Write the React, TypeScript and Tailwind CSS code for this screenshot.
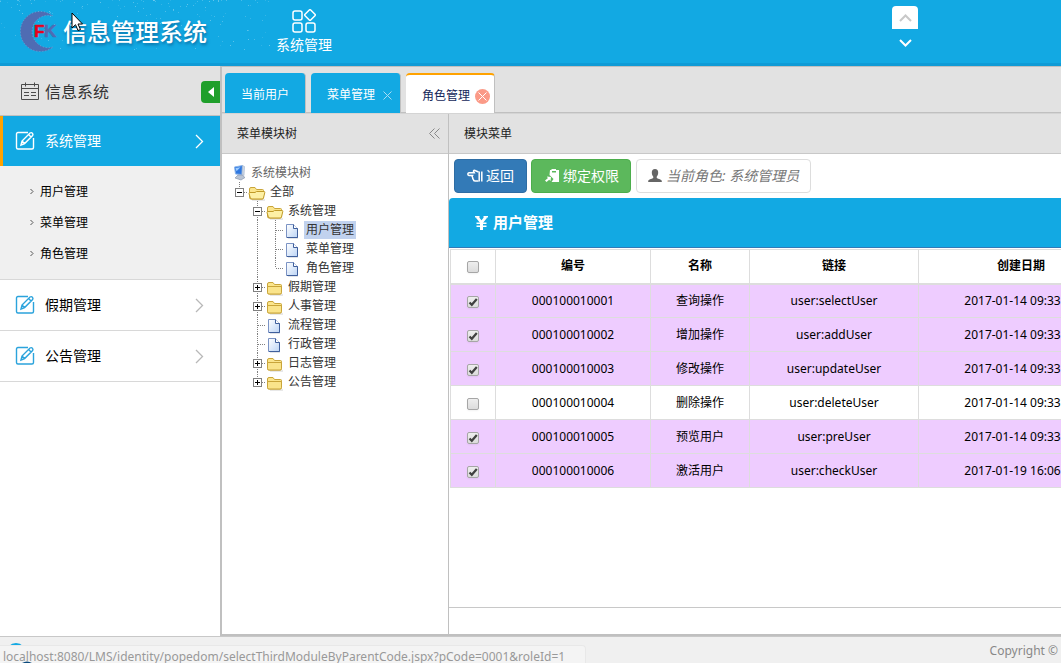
import { useState } from "react";

type NodeKind = "folder" | "open" | "page";
type Toggle = "minus" | "plus" | "none";

interface TreeRow {
  name: string;
  kind: NodeKind;
  toggle: Toggle;
  level: number;
  last?: boolean;
  selected?: boolean;
}

const treeRows: TreeRow[] = [
  { name: "全部", kind: "open", toggle: "minus", level: 0, last: true },
  { name: "系统管理", kind: "open", toggle: "minus", level: 1 },
  { name: "用户管理", kind: "page", toggle: "none", level: 2, selected: true },
  { name: "菜单管理", kind: "page", toggle: "none", level: 2 },
  { name: "角色管理", kind: "page", toggle: "none", level: 2, last: true },
  { name: "假期管理", kind: "folder", toggle: "plus", level: 1 },
  { name: "人事管理", kind: "folder", toggle: "plus", level: 1 },
  { name: "流程管理", kind: "page", toggle: "none", level: 1 },
  { name: "行政管理", kind: "page", toggle: "none", level: 1 },
  { name: "日志管理", kind: "folder", toggle: "plus", level: 1 },
  { name: "公告管理", kind: "folder", toggle: "plus", level: 1, last: true },
];

const operations = [
  { code: "000100010001", name: "查询操作", url: "user:selectUser", date: "2017-01-14 09:33:35" },
  { code: "000100010002", name: "增加操作", url: "user:addUser", date: "2017-01-14 09:33:35" },
  { code: "000100010003", name: "修改操作", url: "user:updateUser", date: "2017-01-14 09:33:35" },
  { code: "000100010004", name: "删除操作", url: "user:deleteUser", date: "2017-01-14 09:33:35" },
  { code: "000100010005", name: "预览用户", url: "user:preUser", date: "2017-01-14 09:33:35" },
  { code: "000100010006", name: "激活用户", url: "user:checkUser", date: "2017-01-19 16:06:12" },
];

const stars = Array.from({ length: 150 }, (_, i) => {
  const a = Math.abs(Math.sin(i * 12.9898) * 43758.5453) % 1;
  const b = Math.abs(Math.sin(i * 78.233) * 12543.123) % 1;
  return { x: Math.floor(a * 270), y: Math.floor(b * b * 50), o: 0.1 + ((i * 7) % 10) / 40 };
});

const Logo = () => (
  <svg width="42" height="42" viewBox="0 0 42 42" className="shrink-0">
    <path
      d="M33 5 A20 20 0 1 0 33 36 A16.2 16.2 0 1 1 33 5Z"
      fill="#4f6cb3"
      stroke="#7aa5d6"
      strokeWidth="0.8"
      strokeDasharray="1 2"
    />
    <text x="14" y="26" fontSize="17" fontWeight="900" fontFamily="Liberation Sans, sans-serif" fill="#e8001c" stroke="#e8001c" strokeWidth="0.6">
      F
    </text>
    <text x="24" y="26" fontSize="17" fontWeight="900" fontFamily="Liberation Sans, sans-serif" fill="#4f6cb3" stroke="#4f6cb3" strokeWidth="0.6">
      K
    </text>
  </svg>
);

const GridIcon = () => (
  <svg width="24" height="24" viewBox="0 0 24 24" fill="none" stroke="white" strokeWidth="1.5">
    <rect x="1" y="2" width="9" height="9" rx="2" />
    <rect x="1" y="14" width="9" height="9" rx="2" />
    <rect x="14" y="14" width="9" height="9" rx="2" />
    <rect x="14" y="2" width="8" height="8" rx="1" transform="rotate(45 18 6)" />
  </svg>
);

const CalendarIcon = () => (
  <svg width="19" height="19" viewBox="0 0 19 19" fill="none" stroke="#4a4a4a" strokeWidth="1">
    <path d="M.5 2.500h17v15H.5zM.5 6.500h17M4.500.5v4M13.500.5v4" />
    <path d="M3 10.500h5M10 10.500h5M3 13.500h5M10 13.500h5" />
  </svg>
);

const EditIcon = ({ color }: { color: string }) => (
  <svg width="20" height="20" viewBox="0 0 20 20" fill="none" stroke={color} strokeWidth="1.4">
    <path d="M13 1.500H3Q1.500 1.500 1.500 3v13.500q0 1.500 1.500 1.500h14q1.500 0 1.500-1.500V7" />
    <path d="M6 14l1-4 8-8q1.400-.8 2.400.2t.2 2.400l-8 8zM13.500 3.500l2.600 2.600M7 10l2.800 2.700" />
  </svg>
);

const Chevron = ({ color }: { color: string }) => (
  <svg width="9" height="15" viewBox="0 0 9 15" fill="none" stroke={color} strokeWidth="1.3">
    <path d="M1 1l6.500 6.500L1 14" />
  </svg>
);

const Bars = ({ end }: { end: boolean }) => (
  <svg width="18" height="19" className="shrink-0" stroke="#808080" strokeDasharray="1 1" fill="none">
    <path d={end ? "M9.500 0v10" : "M9.500 0v19"} />
    <path d="M10 10.500h8" />
  </svg>
);

const Branch = ({ row }: { row: TreeRow }) => {
  if (row.toggle === "none") return <Bars end={!!row.last} />;
  return (
    <button type="button" aria-label={row.name} className="shrink-0 cursor-pointer">
      <svg width="18" height="19" fill="none" className="block">
        <g stroke="#808080" strokeDasharray="1 1">
          <path d={row.last ? "M9.500 0v10" : "M9.500 0v19"} />
          <path d="M14 10.500h4" />
        </g>
        <rect x="5.500" y="6.500" width="8" height="8" fill="white" stroke="#808080" />
        <path d={row.toggle === "plus" ? "M7 10.500h5M9.500 8v5" : "M7 10.500h5"} stroke="black" />
      </svg>
    </button>
  );
};

const NodeIcon = ({ kind }: { kind: NodeKind }) => {
  if (kind === "page") {
    return (
      <svg width="18" height="19" className="shrink-0">
        <defs>
          <linearGradient id="paper" x1="0" y1="0" x2="1" y2="1">
            <stop offset="0" stopColor="#ffffff" />
            <stop offset="1" stopColor="#bcd4f5" />
          </linearGradient>
        </defs>
        <path d="M4 17.500h10v1H4z" fill="#c4c8d0" />
        <path d="M2.500 4.500h7l4 4v9h-11z" fill="url(#paper)" stroke="#7b93c4" />
        <path d="M9.500 4.500v4h4" fill="#ffffff" stroke="#3f5f9c" />
        <path d="M13.500 8.500v9H3" fill="none" stroke="#3f5f9c" />
      </svg>
    );
  }
  return (
    <svg width="18" height="19" className="shrink-0">
      <path d="M4 17.500h13v1H4z" fill="#d0d0d0" />
      <path d="M1.500 7q0-1.500 1.500-1.500h4l1.500 2h6q1 0 1 1v7q0 1.500-1.500 1.500H3q-1.500 0-1.500-1.500z" fill="#fbe58c" stroke="#c9a53a" />
      {kind === "open" ? (
        <path d="M2.500 16.500L1 11.500q0-1 1-1h5l1.500-1h7.500q1 0 .8 1L15.500 16q-.3 1-1.300 1H4z" fill="#fdf0a5" stroke="#c09a28" />
      ) : (
        <path d="M1.500 9.500h14v6q0 1.500-1.500 1.500H3q-1.500 0-1.500-1.500z" fill="#fae48b" stroke="#c9a53a" />
      )}
    </svg>
  );
};

const ComputerIcon = () => (
  <svg width="18" height="19" className="shrink-0">
    <path d="M4.500 4l8-1.500-.5 9-6.500-.5z" fill="#2f78e0" stroke="#8ab4ea" />
    <path d="M12.500 2.500l2 1-.5 9-2-1z" fill="#cfd8e6" stroke="#9fb0c8" strokeWidth="0.6" />
    <path d="M5.500 5l5-.8-4 4z" fill="#9dccff" />
    <path d="M8 12h4l3 2.500-4 2.500-6-2z" fill="#b9c4d4" stroke="#7f8fa8" strokeWidth="0.6" />
  </svg>
);

const HandIcon = () => (
  <svg width="16" height="14" viewBox="0 0 16 14" fill="none" stroke="white" strokeWidth="1.5">
    <path d="M11.500 3L8 1.500q-1.500-.5-1.500.8l.8 1.500H2q-1.200.2-1.200 1.300T2 6.500h3.500q-.8 1.300.2 2.200-.3 1.300.7 1.800 0 1.500 1.600 1.500h3.500" />
    <path d="M12.200 2.500v10M14.800 2.500v10" />
  </svg>
);

const PasteIcon = () => (
  <svg width="14" height="14" viewBox="0 0 14 14" fill="white">
    <path d="M5 1h1.500V0h4.500v1H14v12H6.500l2-3-4-4z M7 2v1.500h4V2z" fillRule="evenodd" />
    <path d="M2 7.500L6 8l-.5 4-1.300-1.300L1.500 13 0 11.500l2.800-2.200z" />
  </svg>
);

const UserIcon = () => (
  <svg width="14" height="14" viewBox="0 0 14 14" fill="#666">
    <path d="M7 0c2.200 0 3.300 1.600 3.200 3.800C10.100 5.900 9.300 7 8.700 7.700v1c.4 1 4.300 1.300 5.100 3V13H.2v-1.300c.8-1.700 4.700-2 5.100-3v-1C4.700 7 3.900 5.900 3.800 3.800 3.700 1.600 4.800 0 7 0z" />
  </svg>
);

const YenIcon = () => (
  <svg width="13" height="14" viewBox="0 0 13 14" fill="none" stroke="white">
    <path d="M2 0.800L6.500 6.500 11 0.800" strokeWidth="2.800" />
    <path d="M0 .8h4.500M8.500.8H13" strokeWidth="1.400" />
    <path d="M6.500 5.500V14" strokeWidth="3" />
    <path d="M1.500 7.300h10M1.500 10.300h10" strokeWidth="1.500" />
  </svg>
);

const Check = ({ label, checked, onChange }: { label: string; checked: boolean; onChange: () => void }) => (
  <label className="relative inline-block h-3 w-3 align-middle">
    <input
      type="checkbox"
      aria-label={label}
      checked={checked}
      onChange={onChange}
      className="block h-3 w-3 appearance-none rounded-xs border border-[#a6a6a6] bg-gradient-to-b from-[#eeeeee] to-[#dcdcdc] shadow-xs"
    />
    {checked && (
      <svg width="12" height="12" className="pointer-events-none absolute top-0 left-0" fill="none" stroke="#404040" strokeWidth="2.2">
        <path d="M2.500 6.500l2.300 2.300L9.800 3" />
      </svg>
    )}
  </label>
);

const Header = () => (
  <header className="relative flex h-[66px] shrink-0 overflow-hidden border-b-3 border-[#0f9bd6] bg-[#12a9e3] text-white">
    <svg width="280" height="60" className="absolute top-0 left-0">
      {stars.map((s, i) => (
        <rect key={i} x={s.x} y={s.y} width="1" height="1" fill="white" opacity={s.o} />
      ))}
    </svg>
    <div className="relative flex w-[260px] shrink-0 items-center pl-5">
      <Logo />
      <h1 className="pl-px text-2xl font-medium whitespace-nowrap [text-shadow:1px_2px_3px_rgba(0,60,110,0.5)]">
        信息管理系统
      </h1>
      <svg width="12" height="20" viewBox="0 0 12 20" className="absolute top-3 left-[71px]">
        <path d="M1 1v15l3.500-3.300L7 18.500l2.500-1L7 12h4.500z" fill="white" stroke="black" />
      </svg>
    </div>
    <a href="#system" className="flex w-[88px] flex-col items-center pt-[9px] text-sm">
      <GridIcon />
      <span className="pt-0.5">系统管理</span>
    </a>
    <div className="mr-[143px] ml-auto flex flex-col pt-1.5">
      <button type="button" aria-label="上一页" className="flex h-[23px] w-[26px] items-center justify-center rounded-t-sm bg-white">
        <svg width="13" height="8" fill="none" stroke="#c8c8c8" strokeWidth="2">
          <path d="M1 7l5.500-5.500L12 7" />
        </svg>
      </button>
      <button type="button" aria-label="下一页" className="flex h-7 w-[26px] items-center justify-center">
        <svg width="13" height="8" fill="none" stroke="white" strokeWidth="2">
          <path d="M1 1l5.500 5.500L12 1" />
        </svg>
      </button>
    </div>
  </header>
);

const Sidebar = () => (
  <aside className="flex w-[220px] shrink-0 flex-col bg-white">
    <div className="flex h-[50px] items-center border-b border-[#c0c0c0] bg-[#e2e2e2] pt-0.5 pl-[21px]">
      <CalendarIcon />
      <h2 className="pl-[5px] text-base text-[#333]">信息系统</h2>
      <button type="button" aria-label="收起" className="ml-auto flex h-[22px] w-[19px] items-center justify-center rounded-l-sm bg-[#1f9f2b]">
        <svg width="6" height="10" fill="white">
          <path d="M6 0v10L0 5z" />
        </svg>
      </button>
    </div>
    <a href="#sys" className="flex h-[50px] items-center border-l-3 border-[#ffa200] bg-[#12a9e3] pr-4 pl-3 text-sm text-white">
      <EditIcon color="white" />
      <span className="pl-2.5">系统管理</span>
      <span className="ml-auto">
        <Chevron color="white" />
      </span>
    </a>
    <ul className="border-b border-[#d8d8d8] bg-[#f0f0f0] py-2.5">
      {["用户管理", "菜单管理", "角色管理"].map((item) => (
        <li key={item}>
          <a href={"#" + item} className="flex h-[31px] items-center gap-1.5 pl-[30px] text-xs text-black">
            <svg width="4" height="5" fill="none" stroke="#555">
              <path d="M.5 0l2.500 2.500L.5 5" />
            </svg>
            {item}
          </a>
        </li>
      ))}
    </ul>
    {["假期管理", "公告管理"].map((item) => (
      <a key={item} href={"#" + item} className="flex h-[51px] items-center border-b border-[#d8d8d8] pr-4 pl-[15px] text-sm text-black">
        <EditIcon color="#2ba3dc" />
        <span className="pl-2.5">{item}</span>
        <span className="ml-auto">
          <Chevron color="#b8b8b8" />
        </span>
      </a>
    ))}
  </aside>
);

const Tabs = () => (
  <nav className="flex h-[46px] items-end gap-[5px] border-b border-[#c0c0c0] bg-[#e2e2e2] pl-[3px] text-xs">
    <button type="button" className="-mb-px h-10 rounded-t border-r border-[#c0c0c0] bg-[#12a9e3] px-4 pt-1 text-white">
      当前用户
    </button>
    <div className="-mb-px flex h-10 items-center gap-2 rounded-t border-r border-[#c0c0c0] bg-[#12a9e3] pt-1 pr-2 pl-4 text-white">
      <button type="button">菜单管理</button>
      <button type="button" aria-label="关闭菜单管理">
        <svg width="9" height="9" stroke="#a8dcf3">
          <path d="M.5.5l8 8M8.500.5l-8 8" />
        </svg>
      </button>
    </div>
    <div className="-mb-px flex h-10 items-center gap-[5px] rounded-t border-t-2 border-r border-t-[#ffa200] border-r-[#c0c0c0] bg-white pt-1 pr-1 pl-4 text-[#14285a]">
      <button type="button">角色管理</button>
      <button type="button" aria-label="关闭角色管理" className="flex h-[15px] w-[15px] items-center justify-center rounded-full bg-[#fb9a87]">
        <svg width="9" height="9" stroke="white">
          <path d="M.5.5l8 8M8.500.5l-8 8" />
        </svg>
      </button>
    </div>
  </nav>
);

const ModuleTree = () => (
  <section className="flex w-[227px] shrink-0 flex-col border-r border-[#c0c0c0]">
    <div className="flex h-10 items-center justify-between border-b border-[#c8c8c8] bg-[#e2e2e2] pr-2 pl-[15px] text-xs">
      <h3 className="text-[#222]">菜单模块树</h3>
      <button type="button" aria-label="折叠">
        <svg width="11" height="11" fill="none" stroke="#888">
          <path d="M5.500.5l-5 5 5 5M10.500.5l-5 5 5 5" />
        </svg>
      </button>
    </div>
    <div className="pt-[9px] pl-2 text-xs text-[#333]">
      <div className="flex h-[19px] items-center text-[#666]">
        <ComputerIcon />
        <span className="pl-[3px]">系统模块树</span>
      </div>
      {treeRows.map((row, i) => (
        <div key={i} className="flex h-[19px] items-center">
          {row.level > 0 && <span className="w-[18px]" />}
          {row.level > 1 && (
            <svg width="18" height="19" stroke="#808080" strokeDasharray="1 1">
              <path d="M9.500 0v19" />
            </svg>
          )}
          <Branch row={row} />
          <NodeIcon kind={row.kind} />
          <a
            href="#node"
            className={
              row.selected
                ? "ml-0.5 bg-[#c1d2ee] px-0.5 leading-[18px]"
                : "ml-0.5 px-0.5 leading-[18px]"
            }
          >
            {row.name}
          </a>
        </div>
      ))}
    </div>
  </section>
);

const ModuleTable = () => {
  const [checked, setChecked] = useState<boolean[]>([true, true, true, false, true, true]);
  const all = checked.every(Boolean);
  const toggle = (index: number) => {
    setChecked(checked.map((c, i) => (i === index ? !c : c)));
  };
  return (
    <table className="w-full min-w-[674px] table-fixed border-collapse text-center text-xs text-black">
      <colgroup>
        <col className="w-[45px]" />
        <col className="w-[155px]" />
        <col className="w-[99px]" />
        <col className="w-[169px]" />
        <col />
      </colgroup>
      <thead>
        <tr className="h-[34px]">
          <th className="border border-b-2 border-[#ddd]">
            <Check label="全选" checked={all} onChange={() => setChecked(checked.map(() => !all))} />
          </th>
          <th className="border border-b-2 border-[#ddd]">编号</th>
          <th className="border border-b-2 border-[#ddd]">名称</th>
          <th className="border border-b-2 border-[#ddd]">链接</th>
          <th className="border border-b-2 border-[#ddd]">创建日期</th>
        </tr>
      </thead>
      <tbody>
        {operations.map((op, i) => (
          <tr key={op.code} className={checked[i] ? "h-[34px] bg-[#eeccff]" : "h-[34px] bg-white"}>
            <td className="border border-[#ddd] pt-px">
              <Check label={op.name} checked={checked[i]} onChange={() => toggle(i)} />
            </td>
            <td className="border border-[#ddd]">{op.code}</td>
            <td className="border border-[#ddd]">{op.name}</td>
            <td className="border border-[#ddd]">{op.url}</td>
            <td className="border border-[#ddd] whitespace-nowrap">{op.date}</td>
          </tr>
        ))}
      </tbody>
    </table>
  );
};

const ModulePanel = () => (
  <section className="flex min-w-0 flex-1 flex-col overflow-hidden">
    <div className="flex h-10 shrink-0 items-center border-b border-[#c8c8c8] bg-[#e2e2e2] pl-[15px] text-xs">
      <h3 className="text-[#222]">模块菜单</h3>
    </div>
    <div className="flex flex-1 flex-col border-b border-[#c8c8c8]">
      <div className="flex gap-1 py-[5px] pl-[5px] text-sm">
        <button type="button" className="flex h-[34px] items-center gap-[3px] rounded border border-[#2e6da4] bg-[#337ab7] pr-3 pl-[12px] text-white">
          <HandIcon />
          返回
        </button>
        <button type="button" className="flex h-[34px] items-center gap-1 rounded border border-[#4cae4c] bg-[#5cb85c] pr-[11px] pl-[13px] text-white">
          <PasteIcon />
          绑定权限
        </button>
        <div className="ml-px flex h-[34px] items-center gap-1 rounded border border-[#ddd] px-[11px] text-[#777]">
          <UserIcon />
          <span className="italic">当前角色: 系统管理员</span>
        </div>
      </div>
      <div className="flex h-[50px] items-center gap-[5px] rounded-tl border-b border-[#337ab7] bg-[#12a9e3] pl-[26px] text-white">
        <YenIcon />
        <h3 className="text-[15px] font-bold">用户管理</h3>
      </div>
      <div className="flex-1 overflow-hidden pt-px pl-px">
        <ModuleTable />
      </div>
    </div>
    <div className="h-[26px] shrink-0" />
  </section>
);

const Footer = () => (
  <footer className="relative flex h-[27px] shrink-0 items-center justify-end border-t border-[#c8c8c8] bg-[#f0f0f0] text-xs text-[#888]">
    <svg width="24" height="26" className="absolute top-0 left-1">
      <circle cx="12" cy="16" r="10" fill="#12a9e3" />
    </svg>
    <p className="pt-0.5 pr-[3px] whitespace-nowrap">Copyright ©</p>
    <div className="absolute bottom-0 left-0 flex h-[18px] items-end rounded-tr border-t border-r border-[#e8e8e8] bg-[#f4f4f4] pr-5 pl-[3px] text-xs leading-3 whitespace-nowrap text-[#999]">
      localhost:8080/LMS/identity/popedom/selectThirdModuleByParentCode.jspx?pCode=0001&amp;roleId=1
    </div>
    <svg width="10" height="2" className="absolute bottom-0 left-[22px]">
      <path d="M0 2q5-3 10 0z" fill="#0b4a7c" />
    </svg>
  </footer>
);

const App = () => {
  return (
    <div className="flex min-h-screen flex-col overflow-hidden bg-white font-['Noto_Sans','Noto_Sans_CJK_SC',sans-serif]">
      <Header />
      <div className="flex flex-1">
        <Sidebar />
        <main className="flex min-w-0 flex-1 flex-col border-t border-b-2 border-l-2 border-[#c0c0c0]">
          <Tabs />
          <div className="flex flex-1 border-t border-[#d4d4d4]">
            <ModuleTree />
            <ModulePanel />
          </div>
        </main>
      </div>
      <Footer />
    </div>
  );
};

export default App;
